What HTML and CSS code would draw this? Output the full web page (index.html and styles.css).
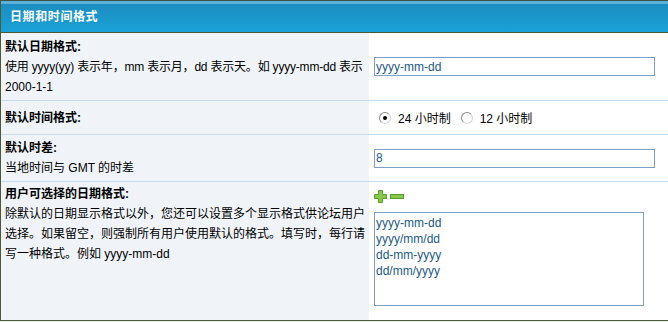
FILE: index.html
```html
<!DOCTYPE html>
<html lang="zh-CN">
<head>
<meta charset="utf-8">
<title>日期和时间格式</title>
<link rel="stylesheet" href="styles.css">
</head>
<body>
<div class="panel">
  <div class="head">日期和时间格式</div>
  <div class="row r1">
    <div class="lab"><b>默认日期格式:</b><br><span class="nw">使用 yyyy(yy) 表示年，mm 表示月，dd 表示天。如 yyyy-mm-dd 表示</span><br>2000-1-1</div>
    <div class="val"><input class="txt" type="text" value="yyyy-mm-dd"></div>
  </div>
  <div class="row r2">
    <div class="lab"><b>默认时间格式:</b></div>
    <div class="val radios">
      <label class="opt"><input type="radio" name="tf" checked> 24 小时制</label>
      <label class="opt"><input type="radio" name="tf"> 12 小时制</label>
    </div>
  </div>
  <div class="row r3">
    <div class="lab"><b>默认时差:</b><br>当地时间与 GMT 的时差</div>
    <div class="val"><input class="txt" type="text" value="8"></div>
  </div>
  <div class="row r4">
    <div class="lab top"><b>用户可选择的日期格式:</b><br>除默认的日期显示格式以外，您还可以设置多个显示格式供论坛用户选择。如果留空，则强制所有用户使用默认的格式。填写时，每行请写一种格式。例如 yyyy-mm-dd</div>
    <div class="val top">
      <div class="tools">
        <svg width="13" height="13" viewBox="0 0 13 13"><path d="M4.5 0.5h4v4h4v4h-4v4h-4v-4h-4v-4h4z" fill="#86c94a" stroke="#5d9b2c"/></svg>
        <svg width="14" height="13" viewBox="0 0 14 13"><rect x="0.5" y="4.5" width="13" height="4" fill="#86c94a" stroke="#5d9b2c"/></svg>
      </div>
      <textarea class="area">yyyy-mm-dd
yyyy/mm/dd
dd-mm-yyyy
dd/mm/yyyy</textarea>
    </div>
  </div>
</div>
</body>
</html>
```
FILE: styles.css
```css
html, body {
  margin: 0;
  padding: 0;
  background: #e3ebf3;
}
body {
  font-family: "Liberation Sans", "Noto Sans CJK SC", sans-serif;
  font-size: 12px;
  color: #000;
}
.panel {
  border-left: 1px solid #4b5a33;
  border-top: 1px solid #3c5440;
  border-bottom: 1px solid #4b5a33;
  background: #fff;
}
.head {
  box-sizing: border-box;
  height: 32px;
  border-bottom: 1px solid #4b5a33;
  border-top: 3px solid #5ab0d8;
  background: linear-gradient(#1d8dbf, #19a2d8);
  color: #fff;
  font-weight: bold;
  font-size: 12px;
  line-height: 27px;
  padding-left: 9px;
  letter-spacing: 0.6px;
}
.row {
  display: grid;
  grid-template-columns: 368px 1fr;
  align-items: center;
  border-bottom: 1px solid #c5dbee;
  background: linear-gradient(90deg, #f0f4f8 368px, #fff 368px);
}
.r1 { height: 67px; }
.r2 { height: 33px; }
.r3 { height: 46px; }
.r4 { height: 138px; border-bottom: none; }
.lab {
  padding: 0 2px 0 4px;
  line-height: 20px;
}
.nw {
  white-space: nowrap;
  letter-spacing: -0.2px;
}
.top { align-self: start; }
.lab.top { padding-top: 2px; }
.val {
  padding: 0 5px;
}
.txt {
  display: block;
  box-sizing: border-box;
  width: 281px;
  height: 19px;
  margin: 0;
  padding: 0 1px;
  border: 1px solid #7b9fc6;
  font-family: "Liberation Sans", sans-serif;
  font-size: 12px;
  color: #1b5a85;
  outline: none;
}
.radios {
  display: flex;
  align-items: center;
  gap: 10px;
  padding-left: 10px;
}
.opt {
  display: flex;
  align-items: center;
  font-size: 12px;
}
.opt input {
  -webkit-appearance: none;
  appearance: none;
  box-sizing: border-box;
  width: 12px;
  height: 12px;
  margin: 0 7px 0 0;
  border-radius: 50%;
  border: 1px solid #8a8a8a;
  border-right-color: #d8d8d8;
  border-bottom-color: #d8d8d8;
  background: #fff;
  position: relative;
}
.opt input:checked::after {
  content: "";
  position: absolute;
  left: 3px;
  top: 3px;
  width: 4px;
  height: 4px;
  border-radius: 50%;
  background: #000;
}
.val.top {
  padding-top: 8px;
}
.tools {
  display: flex;
  gap: 3px;
  height: 13px;
  margin-bottom: 9px;
}
.tools svg { display: block; }
.area {
  display: block;
  box-sizing: border-box;
  width: 270px;
  height: 94px;
  margin: 0;
  padding: 2px 1px;
  border: 1px solid #7b9fc6;
  font-family: "Liberation Sans", sans-serif;
  font-size: 12px;
  line-height: 16px;
  color: #1b5a85;
  resize: none;
  overflow: hidden;
  outline: none;
}
```
